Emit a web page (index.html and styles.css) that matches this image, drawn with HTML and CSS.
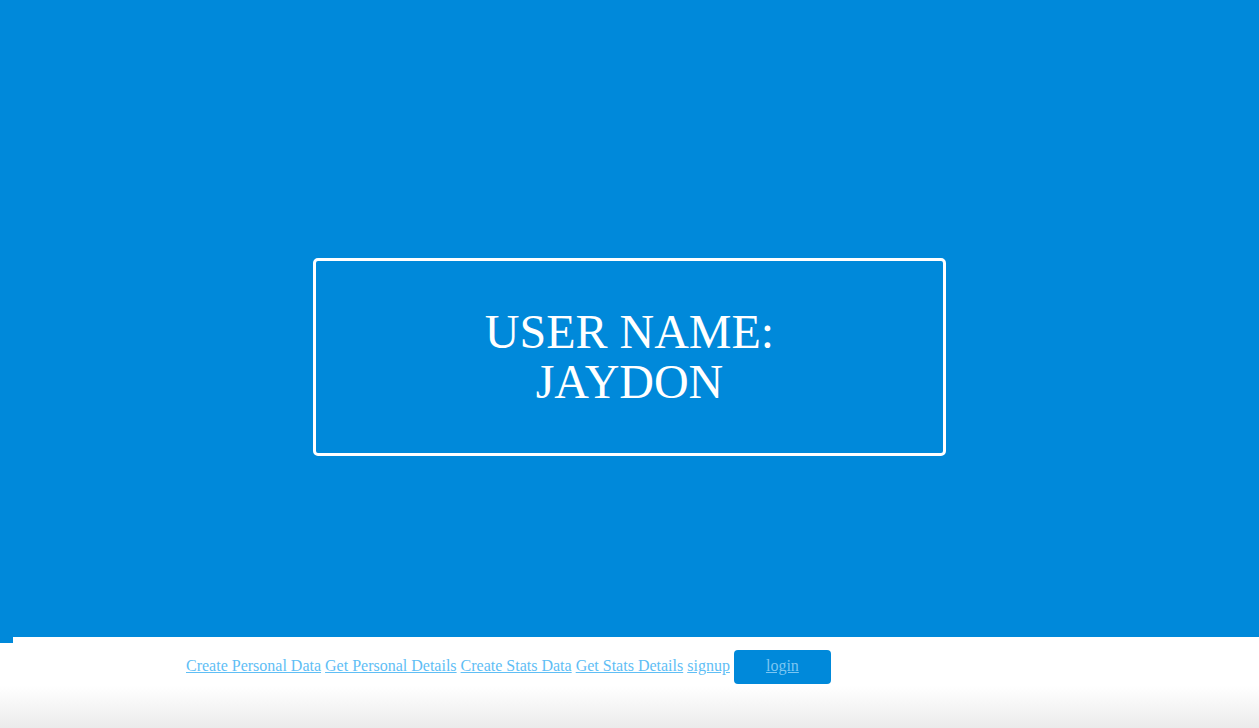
FILE: index.html
```html
<!DOCTYPE html>
<html>
<head>
<meta charset="utf-8">
<link rel="stylesheet" href="styles.css">
</head>
<body>
<div class="hero">
  <div class="card">
    <div class="card-text">USER NAME:<br>JAYDON</div>
  </div>
</div>
<div class="tab"></div>
<nav class="nav">
  <a href="#">Create Personal Data</a>
  <a href="#">Get Personal Details</a>
  <a href="#">Create Stats Data</a>
  <a href="#">Get Stats Details</a>
  <a href="#">signup</a>
  <span class="btn"><a href="#">login</a></span>
</nav>
</body>
</html>
```
FILE: styles.css
```css
html {
  height: 100%;
  background: linear-gradient(to bottom, #ffffff 0, #ffffff 686px, #ebebeb 728px);
}
body {
  margin: 0;
  font-family: "Liberation Serif", "Times New Roman", serif;
  font-size: 16px;
}
.hero {
  height: 637px;
  background: #0089da;
  display: flex;
  flex-direction: column;
  align-items: center;
}
.card {
  margin-top: 258px;
  width: 627px;
  height: 192px;
  border: 3px solid #ffffff;
  border-radius: 5px;
  display: flex;
  align-items: center;
  justify-content: center;
}
.card-text {
  color: #ffffff;
  font-size: 48px;
  line-height: 50px;
  text-align: center;
}
.tab {
  width: 13px;
  height: 6px;
  background: #0089da;
}
.nav {
  padding: 7px 0 0 186px;
  line-height: normal;
}
.nav a {
  color: #5fbef5;
  text-decoration: underline;
}
.btn {
  display: inline-block;
  background: #0089da;
  border-radius: 4px;
  padding: 7px 32px 8.6px 32px;
  width: 33px;
  text-align: center;
}
.btn a {
  color: #7cc6f2;
}
```
